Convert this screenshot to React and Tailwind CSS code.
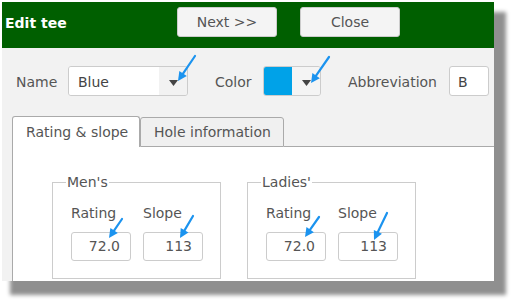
import React from "react";

const font = { fontFamily: '"DejaVu Sans", Verdana, sans-serif' };

// annotation arrows, page coordinates: tail -> tip
const arrows = [
  [195, 56, 178, 81],
  [329, 57, 311, 83],
  [122, 219, 109, 238],
  [193, 216, 180, 238],
  [319, 217, 305, 237],
  [387, 213, 374, 240],
];

function Arrow({ x1, y1, x2, y2 }) {
  const dx = x2 - x1;
  const dy = y2 - y1;
  const len = Math.hypot(dx, dy);
  const ux = dx / len;
  const uy = dy / len;
  const head = 9;
  const half = 4.5;
  const bx = x2 - ux * head;
  const by = y2 - uy * head;
  const pts = [
    [x2, y2],
    [bx - uy * half, by + ux * half],
    [bx + uy * half, by - ux * half],
  ]
    .map((p) => p.join(","))
    .join(" ");
  return (
    <g>
      <line x1={x1} y1={y1} x2={bx + ux * 1} y2={by + uy * 1} stroke="#1b93ef" strokeWidth="2.2" strokeLinecap="round" />
      <polygon points={pts} fill="#1b93ef" />
    </g>
  );
}

function Caret() {
  return (
    <svg width="9" height="6" viewBox="0 0 9 6">
      <polygon points="0,0 9,0 4.5,6" fill="#444" />
    </svg>
  );
}

function Field({ value }) {
  return (
    <div className="w-[60px] h-[29px] border border-[#ccc] rounded-[3px] bg-white flex items-center justify-end pr-[10px] text-[14px] text-[#555]">
      {value}
    </div>
  );
}

function Group({ title }) {
  return (
    <fieldset className="w-[169px] self-start border border-[#ccc] pl-[18px] pr-[16px] pt-[14px] pb-[17px]">
      <legend className="ml-[-5px] px-[1px] text-[14px] leading-[17px] text-[#555]">{title}</legend>
      <div className="flex gap-[12px]">
        <div className="flex flex-col gap-[10px]">
          <span className="text-[14px] leading-[17px] text-[#555]">Rating</span>
          <Field value="72.0" />
        </div>
        <div className="flex flex-col gap-[10px]">
          <span className="text-[14px] leading-[17px] text-[#555]">Slope</span>
          <Field value="113" />
        </div>
      </div>
    </fieldset>
  );
}

export default function App() {
  return (
    <div className="relative w-[517px] h-[301px] bg-white overflow-hidden" style={font}>
      <div className="ml-[2px] mt-[2px] w-[492px] h-[279px] flex flex-col bg-[#f2f2f2] overflow-hidden shadow-[10px_12px_4px_2px_rgba(0,0,0,0.44)]">
        {/* title bar */}
        <div className="h-[46px] shrink-0 bg-[#005f00] flex items-start pt-[5px]">
          <span className="w-[175px] pl-[3px] pt-[8px] text-white font-bold text-[14px] leading-[17px]">Edit tee</span>
          <div className="flex gap-[23px]">
            <button className="w-[100px] h-[30px] rounded-[3px] border border-[#ccc] bg-[#f4f4f4] text-[14px] text-[#555]">Next &gt;&gt;</button>
            <button className="w-[100px] h-[30px] rounded-[3px] border border-[#ccc] bg-[#f4f4f4] text-[14px] text-[#555]">Close</button>
          </div>
        </div>

        {/* tee fields */}
        <div className="shrink-0 pt-[18px] pb-[15px] pl-[14px] flex items-center text-[14px] text-[#555]">
          <span className="w-[52px] pt-[2px]">Name</span>
          <div className="w-[120px] h-[30px] flex border border-[#ccc] rounded-[3px] overflow-hidden">
            <div className="flex-1 bg-white flex items-center pl-[9px] pt-[2px] text-[#444]">Blue</div>
            <div className="w-[28px] bg-[#f2f2f2] flex items-center justify-center pt-[3px]">
              <Caret />
            </div>
          </div>
          <span className="ml-[27px] w-[48px] pt-[2px]">Color</span>
          <div className="w-[58px] h-[30px] flex border border-[#ccc] rounded-[3px] overflow-hidden">
            <div className="w-[28px] bg-[#00a2e8]" />
            <div className="flex-1 bg-[#f4f4f4] flex items-center justify-center pt-[3px]">
              <Caret />
            </div>
          </div>
          <span className="ml-[27px] w-[101px] pt-[2px]">Abbreviation</span>
          <div className="w-[40px] h-[30px] border border-[#ccc] rounded-[3px] bg-white flex items-center pl-[8px] pt-[2px] text-[#444]">B</div>
        </div>

        {/* tabs */}
        <div className="flex-1 flex flex-col ml-[10px] mt-[5px]">
          <div className="flex h-[31px] shrink-0 text-[14px] text-[#555] whitespace-nowrap">
            <div className="w-[128px] h-[31px] border border-b-0 border-[#aaa] rounded-t-[3px] bg-white flex items-center pl-[13px]">
              Rating &amp; slope
            </div>
            <div className="w-[144px] h-[30px] mt-auto border border-[#aaa] rounded-t-[3px] bg-[#f0f0f0] flex items-center pl-[13px]">
              Hole information
            </div>
            <div className="flex-1 border-b border-[#aaa]" />
          </div>
          <div className="flex-1 bg-white border-l border-[#aaa] pt-[27px] pl-[39px] flex items-start gap-[26px]">
            <Group title="Men's" />
            <Group title="Ladies'" />
          </div>
        </div>
      </div>

      <svg className="absolute left-0 top-0 pointer-events-none" width="517" height="301">
        {arrows.map(([x1, y1, x2, y2], i) => (
          <Arrow key={i} x1={x1} y1={y1} x2={x2} y2={y2} />
        ))}
      </svg>
    </div>
  );
}
